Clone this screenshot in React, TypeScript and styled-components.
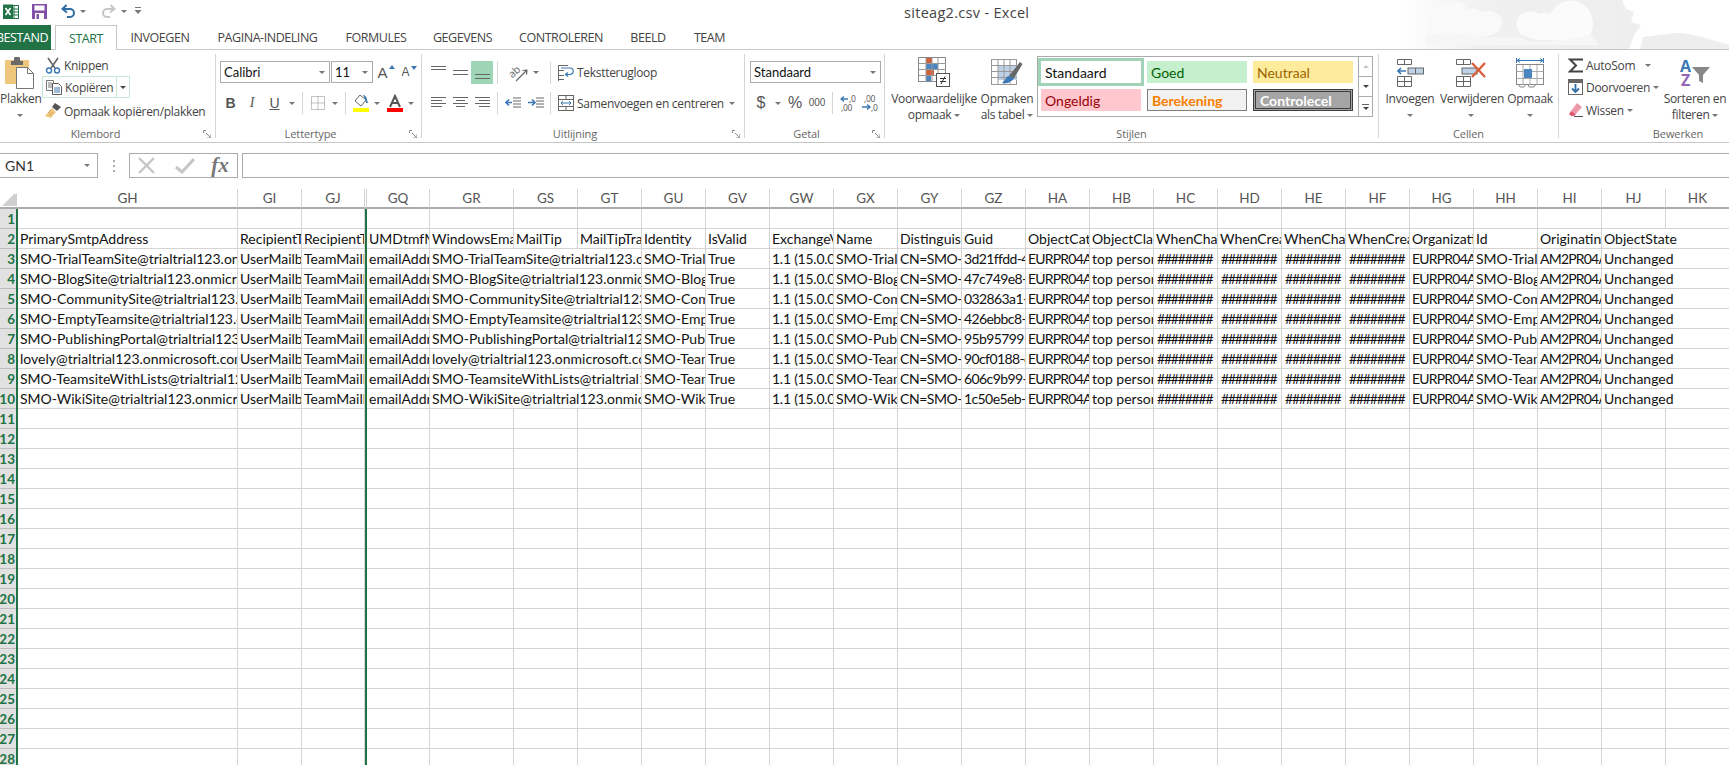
import React from 'react';
import styled, { createGlobalStyle } from 'styled-components';

const UI = `"Open Sans", "Noto Sans", sans-serif`;
const CELL = `Lato, "Open Sans", sans-serif`;

const Global = createGlobalStyle`
  html, body { margin: 0; padding: 0; height: 765px; overflow: hidden; background: #fff; }
  #root { width: 1729px; height: 765px; overflow: hidden; }
  * { box-sizing: border-box; }
`;

const Page = styled.div`
  position: relative;
  width: 1729px;
  height: 765px;
  overflow: hidden;
  background: #fff;
  font-family: ${UI};
  letter-spacing: -0.3px;
  color: #444;
`;

/* ---------- title bar ---------- */
const TitleBar = styled.div`
  display: flex;
  align-items: flex-start;
  height: 25px;
`;
const Qat = styled.div`
  display: flex;
  align-items: center;
  width: 160px;
  height: 22px;
  padding-left: 2px;
`;
const QatSlot = styled.span<{ $w: number }>`
  display: flex;
  align-items: center;
  justify-content: center;
  width: ${p => p.$w}px;
`;
const TitleText = styled.div`
  margin: 5px 0 0 744px;
  font-size: 14.5px;
  line-height: 16px;
  letter-spacing: 0.3px;
  color: #444;
`;
const Watermark = styled.svg`
  position: absolute;
  top: 0;
  left: 1390px;
  pointer-events: none;
`;

/* ---------- tabs ---------- */
const TabRow = styled.div`
  position: relative;
  display: flex;
  height: 25px;
  border-bottom: 1px solid #c6c6c6;
  letter-spacing: -0.45px;
`;
const FileTab = styled.div`
  display: flex;
  align-items: center;
  justify-content: flex-end;
  width: 51px;
  height: 25px;
  padding-right: 3px;
  background: #217346;
  color: #fff;
  font-size: 12.5px;
  overflow: hidden;
  white-space: nowrap;
`;
const ActiveTab = styled.div`
  display: flex;
  align-items: center;
  justify-content: center;
  width: 62px;
  height: 25px;
  margin-left: 4px;
  border: 1px solid #c6c6c6;
  border-bottom: 0;
  background: #fff;
  color: #217346;
  font-size: 12.5px;
`;
const Tab = styled.div<{ $w: number }>`
  display: flex;
  align-items: center;
  justify-content: center;
  width: ${p => p.$w}px;
  height: 24px;
  font-size: 12.5px;
  color: #444;
  white-space: nowrap;
`;

/* ---------- ribbon ---------- */
const Ribbon = styled.div`
  display: flex;
  height: 93px;
  padding-top: 4px;
  border-bottom: 1px solid #c6c6c6;
`;
const Group = styled.section<{ $w: number; $end?: boolean }>`
  flex: none;
  display: flex;
  flex-direction: column;
  width: ${p => p.$w}px;
  height: 84px;
  border-right: ${p => (p.$end ? '0' : '1px solid #d4d4d4')};
`;
const GroupBody = styled.div<{ $pl?: number }>`
  display: flex;
  height: 72px;
  padding-left: ${p => p.$pl ?? 0}px;
`;
const GroupFooter = styled.div<{ $pr?: number }>`
  position: relative;
  height: 12px;
  padding-right: ${p => p.$pr ?? 0}px;
  text-align: center;
  font-size: 11px;
  letter-spacing: -0.1px;
  line-height: 16px;
  color: #666;
`;
const Launcher = styled.svg`
  position: absolute;
  right: 4px;
  top: 4px;
`;
const Caret = styled.span<{ $dark?: boolean; $ml?: number }>`
  display: inline-block;
  width: 0;
  height: 0;
  margin-left: ${p => p.$ml ?? 0}px;
  border-left: 3.5px solid transparent;
  border-right: 3.5px solid transparent;
  border-top: 3.5px solid ${p => (p.$dark ? '#444' : '#777')};
  vertical-align: middle;
`;
const LargeButton = styled.div<{ $w: number; $ml?: number }>`
  flex: none;
  display: flex;
  flex-direction: column;
  align-items: center;
  width: ${p => p.$w}px;
  margin-left: ${p => p.$ml ?? 0}px;
`;
const LargeIcon = styled.div`
  display: flex;
  align-items: center;
  justify-content: center;
  width: 100%;
  height: 37px;
`;
const LargeLabel = styled.div`
  width: 100%;
  text-align: center;
  font-size: 12px;
  line-height: 16px;
  white-space: nowrap;
  color: #444;
`;
const SmallColumn = styled.div<{ $w: number; $ml?: number }>`
  flex: none;
  display: flex;
  flex-direction: column;
  width: ${p => p.$w}px;
  margin-left: ${p => p.$ml ?? 0}px;
`;
const SmallRow = styled.div<{ $mt?: number }>`
  display: flex;
  align-items: center;
  height: 22px;
  margin-top: ${p => p.$mt ?? 0}px;
  font-size: 12px;
  color: #444;
  white-space: nowrap;
`;
const SmallIcon = styled.span`
  flex: none;
  display: flex;
  align-items: center;
  justify-content: center;
  width: 22px;
`;
const CopyBox = styled(SmallRow)`
  width: 88px;
  border: 1px solid #c6e8d5;
`;
const CopyLabel = styled.span`
  display: flex;
  align-items: center;
  flex: 1;
  height: 100%;
  border-right: 1px solid #c6e8d5;
`;
const CopyArrow = styled.span`
  display: flex;
  align-items: center;
  justify-content: center;
  width: 12px;
`;
const ToolColumn = styled.div<{ $mt?: number }>`
  display: flex;
  flex-direction: column;
  margin-top: ${p => p.$mt ?? 7}px;
`;
const ToolRow = styled.div<{ $h?: number; $mt?: number }>`
  display: flex;
  align-items: center;
  height: ${p => p.$h ?? 22}px;
  margin-top: ${p => p.$mt ?? 0}px;
`;
const Tool = styled.span<{ $w: number; $on?: boolean }>`
  flex: none;
  display: flex;
  align-items: center;
  justify-content: center;
  width: ${p => p.$w}px;
  height: 100%;
  background: ${p => (p.$on ? '#9fd5b7' : 'transparent')};
`;
const MarkedGlyph = styled.span`
  display: flex;
  align-items: flex-start;
  gap: 1px;
`;
const Sep = styled.span<{ $w: number }>`
  flex: none;
  display: flex;
  justify-content: center;
  width: ${p => p.$w}px;
  height: 22px;
  &::before { content: ''; width: 1px; height: 100%; background: #d4d4d4; }
`;
const ComboBox = styled.div<{ $w: number; $ml?: number }>`
  flex: none;
  display: flex;
  align-items: center;
  justify-content: space-between;
  width: ${p => p.$w}px;
  height: 22px;
  margin-left: ${p => p.$ml ?? 0}px;
  padding: 0 4px 0 3px;
  border: 1px solid #ababab;
  background: #fff;
  font-family: ${CELL};
  font-size: 13px;
  letter-spacing: 0;
  color: #111;
`;
const FontGlyph = styled.span<{ $size: number; $weight?: number; $italic?: boolean; $line?: boolean; $serif?: boolean }>`
  font-family: ${p => (p.$serif ? '"Liberation Serif", serif' : '"Liberation Sans", sans-serif')};
  font-size: ${p => p.$size}px;
  font-weight: ${p => p.$weight ?? 400};
  font-style: ${p => (p.$italic ? 'italic' : 'normal')};
  text-decoration: ${p => (p.$line ? 'underline' : 'none')};
  letter-spacing: 0;
  color: #555;
  line-height: 1;
`;
const WrapLabel = styled.span`
  font-size: 12px;
  color: #444;
  white-space: nowrap;
`;
const MergeLabel = styled(WrapLabel)`
  width: 152px;
`;

/* style gallery */
const Gallery = styled.div`
  flex: none;
  display: flex;
  width: 336px;
  height: 61px;
  margin: 2px 0 0 3px;
  border: 1px solid #ababab;
`;
const GalleryGrid = styled.div`
  display: grid;
  grid-template-columns: repeat(3, 106px);
  grid-template-rows: repeat(2, 28px);
  padding: 1px 0 1px 0;
  width: 320px;
`;
const styleVariants: Record<string, string> = {
  normal: 'background:#fff;color:#111;outline:3px solid #a0d3b8;',
  good: 'background:#c6efce;color:#006100;',
  neutral: 'background:#ffeb9c;color:#9c6500;',
  bad: 'background:#ffc7ce;color:#9c0006;',
  calc: 'background:#f2f2f2;color:#fa7d00;font-weight:700;border:1px solid #7f7f7f;',
  check: 'background:#a5a5a5;color:#fff;font-weight:700;border:3px double #3f3f3f;',
};
const StyleCell = styled.div<{ $kind: string }>`
  display: flex;
  align-items: center;
  margin: 3px;
  padding-left: 4px;
  font-family: ${CELL};
  font-size: 14px;
  letter-spacing: 0;
  overflow: hidden;
  white-space: nowrap;
  ${p => styleVariants[p.$kind]}
`;
const GalleryScroll = styled.div`
  display: flex;
  flex-direction: column;
  width: 14px;
  border-left: 1px solid #ababab;
`;
const ScrollBtn = styled.div<{ $last?: boolean }>`
  display: flex;
  flex-direction: column;
  align-items: center;
  justify-content: center;
  gap: 2px;
  flex: 1;
  border-bottom: ${p => (p.$last ? '0' : '1px solid #ababab')};
`;
const ScrollBar = styled.span`
  width: 7px;
  height: 1px;
  background: #666;
`;
const ScrollUp = styled.span`
  width: 0;
  height: 0;
  border-left: 3.5px solid transparent;
  border-right: 3.5px solid transparent;
  border-bottom: 3.5px solid #c6c6c6;
`;

/* ---------- formula bar ---------- */
const FormulaBar = styled.div`
  display: flex;
  align-items: stretch;
  height: 25px;
  margin-top: 10px;
`;
const NameBox = styled.div`
  display: flex;
  align-items: center;
  justify-content: space-between;
  width: 99px;
  margin-left: -1px;
  padding: 0 7px 0 5px;
  border: 1px solid #ababab;
  font-family: ${CELL};
  font-size: 14px;
  letter-spacing: 0;
  color: #333;
`;
const Dots = styled.div`
  display: flex;
  align-items: center;
  justify-content: center;
  width: 31px;
  &::before {
    content: '';
    width: 2px;
    height: 2px;
    background: #aaa;
    box-shadow: 0 -5px 0 #aaa, 0 5px 0 #aaa;
  }
`;
const FxBox = styled.div`
  display: flex;
  align-items: center;
  width: 109px;
  border: 1px solid #ababab;
`;
const FxSlot = styled.span<{ $w: number }>`
  display: flex;
  align-items: center;
  justify-content: center;
  width: ${p => p.$w}px;
`;
const FxText = styled.span`
  font-family: "Liberation Serif", serif;
  font-style: italic;
  font-weight: 700;
  font-size: 21px;
  letter-spacing: 0;
  color: #777;
  line-height: 1;
`;
const FormulaInput = styled.div`
  flex: 1;
  margin-left: 4px;
  margin-right: -2px;
  border: 1px solid #ababab;
  border-right: 0;
`;

/* ---------- sheet ---------- */
const Sheet = styled.div`
  display: grid;
  grid-template-columns: 16px 2px 220px 64px 63px 2px 63px 84px repeat(19, 64px);
  grid-template-rows: 20px;
  grid-auto-rows: 20px;
  margin-top: 11px;
  width: 1730px;
  letter-spacing: 0;
`;
const Corner = styled.div`
  position: relative;
  border-bottom: 2px solid #ababab;
  background: #fff;
  &::after {
    content: '';
    position: absolute;
    right: 1px;
    bottom: 1px;
    width: 13px;
    height: 13px;
    background: #cfcfcf;
    clip-path: polygon(100% 0, 100% 100%, 0 100%);
  }
`;
const HeadCell = styled.div`
  display: flex;
  align-items: center;
  justify-content: center;
  border-right: 1px solid #d4d4d4;
  border-bottom: 2px solid #ababab;
  font-family: ${CELL};
  font-size: 13.5px;
  color: #555;
`;
const FreezeHead = styled.div`
  border-bottom: 2px solid #ababab;
  border-right: 1px solid #d4d4d4;
`;
const GreenLine = styled.div`
  background: #217346;
`;
const RowHead = styled.div`
  display: flex;
  align-items: flex-end;
  justify-content: flex-end;
  padding-right: 1px;
  background: #e1e1e1;
  border-bottom: 1px solid #bdbdbd;
  font-family: ${CELL};
  font-weight: 700;
  font-size: 13.5px;
  line-height: 18px;
  color: #217346;
  overflow: hidden;
`;
const Cell = styled.div<{ $span?: number; $tight?: number; $pl?: number }>`
  grid-column: span ${p => p.$span ?? 1};
  padding-left: ${p => p.$pl ?? 2}px;
  border-right: 1px solid #d4d4d4;
  border-bottom: 1px solid #d4d4d4;
  font-family: ${CELL};
  font-size: 14px;
  letter-spacing: ${p => p.$tight ?? 0}px;
  line-height: 19px;
  color: #111;
  white-space: nowrap;
  overflow: hidden;
`;

/* ---------- icons ---------- */
const ExcelLogo = () => (
  <svg width="18" height="18" viewBox="0 0 18 18">
    <rect x="7.5" y="3.5" width="9" height="13" fill="#fff" stroke="#217346" />
    <path d="M12 4v12M8 7h8M8 10h8M8 13h8" stroke="#217346" />
    <rect x="1" y="2.5" width="10" height="14.5" fill="#217346" />
    <path d="M3.5 6l5 7M8.5 6l-5 7" stroke="#fff" strokeWidth="1.7" />
  </svg>
);
const SaveIcon = () => (
  <svg width="15" height="15" viewBox="0 0 15 15">
    <path d="M0 0h15v15H0z" fill="#8250a8" />
    <rect x="2.5" y="1.5" width="10" height="5" fill="#fff" />
    <rect x="3" y="9" width="9" height="6" fill="#fff" />
    <rect x="4.5" y="10" width="2.5" height="5" fill="#8250a8" />
  </svg>
);
const UndoIcon = ({ c }: { c: string }) => (
  <svg width="15" height="14" viewBox="0 0 15 14" fill="none">
    <path d="M5.5 1L1.5 5l4.5 3.5" stroke={c} strokeWidth="2" />
    <path d="M2 5h7a4 4 0 0 1 0 8H6" stroke={c} strokeWidth="2" />
  </svg>
);
const RedoIcon = ({ c }: { c: string }) => (
  <svg width="15" height="14" viewBox="0 0 15 14" fill="none">
    <path d="M9.5 1l4 4L9 8.5" stroke={c} strokeWidth="2" />
    <path d="M13 5H6a4 4 0 0 0 0 8h3" stroke={c} strokeWidth="2" />
  </svg>
);
const CustomizeIcon = () => (
  <svg width="8" height="8" viewBox="0 0 8 8">
    <path d="M1 0h6v1H1zM0.5 3h7L4 7z" fill="#777" />
  </svg>
);
const PasteIcon = () => (
  <svg width="30" height="32" viewBox="0 0 30 32">
    <rect x="0" y="3" width="24" height="24" rx="1" fill="#efc77c" />
    <path d="M6 4h3V2a3 3 0 0 1 6 0v2h3v4H6z" fill="#6b6b6b" />
    <path d="M11.5 10.5h11l6 6v15h-17z" fill="#fff" stroke="#777" />
    <path d="M22.5 10.5v6h6" fill="none" stroke="#777" />
  </svg>
);
const ScissorsIcon = () => (
  <svg width="16" height="17" viewBox="0 0 16 17" fill="none">
    <path d="M3 1l7 10M13 1L6 11" stroke="#666" strokeWidth="1.6" />
    <circle cx="4" cy="13.5" r="2.5" stroke="#3c78b4" strokeWidth="1.4" />
    <circle cx="12" cy="13.5" r="2.5" stroke="#3c78b4" strokeWidth="1.4" />
  </svg>
);
const CopyIcon = () => (
  <svg width="16" height="16" viewBox="0 0 16 16" fill="none">
    <path d="M.5 1.5h7v10h-7z" fill="#fff" stroke="#777" />
    <path d="M2 4h4M2 6h4M2 8h4" stroke="#777" />
    <path d="M6.5 4.5h6l3 3v8h-9z" fill="#fff" stroke="#5b5b5b" />
    <path d="M8 9h6M8 11h6M8 13h6" stroke="#3c78b4" />
  </svg>
);
const BrushIcon = () => (
  <svg width="17" height="16" viewBox="0 0 17 16">
    <path d="M10 0l6 4-4 4-5-4z" fill="#555" />
    <path d="M7 5l4 4-5 6-6-2z" fill="#efc77c" />
    <path d="M3 10l3-3M4.5 12l3-3" stroke="#c99f50" />
  </svg>
);
const TinyA = ({ up }: { up?: boolean }) => (
  <svg width="6" height="4" viewBox="0 0 6 4">
    <path d={up ? 'M0 4h6L3 0z' : 'M0 0h6L3 4z'} fill="#3c78b4" />
  </svg>
);
const BordersIcon = () => (
  <svg width="14" height="14" viewBox="0 0 14 14" fill="none">
    <path d="M.5.5h13v13H.5zM7 .5v13M.5 7h13" stroke="#888" strokeDasharray="1 1" />
  </svg>
);
const FillIcon = () => (
  <svg width="18" height="18" viewBox="0 0 18 18" fill="none">
    <path d="M8 1l6 5-5 6-6-5z" fill="#fff" stroke="#666" />
    <path d="M11 1c2 0 4 2 4 5l1 3-2 0-1-4z" fill="#3c78b4" />
    <rect x="1" y="14" width="16" height="4" fill="#ffff00" />
  </svg>
);
const LinesIcon = ({ y, w = [15, 15], o = 'left' }: { y: number[]; w?: number[]; o?: string }) => (
  <svg width="15" height="15" viewBox="0 0 15 15">
    {y.map((v, i) => {
      const lw = w[i % w.length];
      const x = o === 'left' ? 0 : o === 'right' ? 15 - lw : (15 - lw) / 2;
      return <rect key={i} x={x} y={v} width={lw} height="1" fill="#666" />;
    })}
  </svg>
);
const OrientIcon = () => (
  <svg width="22" height="18" viewBox="0 0 22 18" fill="none">
    <text x="0" y="12" transform="rotate(-42 5 9)" fontFamily="Open Sans, sans-serif" fontSize="10.5" fill="#666">ab</text>
    <path d="M7 17L18 6M18 6l-4.500 .5M18 6l-.5 4.500" stroke="#666" strokeWidth="1.200" />
  </svg>
);
const IndentIcon = ({ inc }: { inc?: boolean }) => (
  <svg width="16" height="12" viewBox="0 0 16 12" fill="none">
    <path d="M8 1h8M8 4h8M8 7h8M8 10h8" stroke="#666" />
    <path d={inc ? 'M0 5.5h6M4 2.5l3 3-3 3' : 'M7 5.5H1M4 2.5l-3 3 3 3'} stroke="#3c78b4" strokeWidth="1.6" />
  </svg>
);
const WrapIcon = () => (
  <svg width="16" height="16" viewBox="0 0 16 16" fill="none">
    <path d="M0 .5h10M0 5.5h6M0 10.5h6M0 14.5h6" stroke="#666" />
    <path d="M.5 0v16" stroke="#666" />
    <path d="M3 3h9a3 3 0 0 1 0 6.500H8M10 7.500l-2.500 2 2.500 2" stroke="#3c78b4" strokeWidth="1.2" />
  </svg>
);
const MergeIcon = () => (
  <svg width="16" height="16" viewBox="0 0 16 16" fill="none">
    <rect x=".5" y=".5" width="15" height="15" stroke="#666" />
    <path d="M1 4.500h14M1 11.500h14M8 1v3.500M8 11.500V15" stroke="#666" />
    <path d="M3 8h10M5 6L3 8l2 2M11 6l2 2-2 2" stroke="#3c78b4" />
  </svg>
);
const DecIcon = ({ inc }: { inc?: boolean }) => (
  <svg width="17" height="17" viewBox="0 0 17 17" fill="none">
    {inc ? (
      <>
        <path d="M8 4H1M4 1.500L1 4l3 2.500" stroke="#3c78b4" strokeWidth="1.400" />
        <text x="9" y="7" fontFamily="Open Sans, sans-serif" fontSize="8.500" fill="#555">,0</text>
        <text x="1" y="16" fontFamily="Open Sans, sans-serif" fontSize="8.500" fill="#555">,00</text>
      </>
    ) : (
      <>
        <text x="2" y="7" fontFamily="Open Sans, sans-serif" fontSize="8.500" fill="#555">,00</text>
        <path d="M0 12h8M5 9.500l3 2.500-3 2.500" stroke="#3c78b4" strokeWidth="1.400" />
        <text x="9" y="16" fontFamily="Open Sans, sans-serif" fontSize="8.500" fill="#555">,0</text>
      </>
    )}
  </svg>
);
const CondFormatIcon = () => (
  <svg width="32" height="32" viewBox="0 0 32 32" fill="none">
    <rect x=".5" y=".5" width="27" height="24" fill="#fff" stroke="#888" />
    <rect x="8" y="1" width="6" height="5" fill="#d0603a" />
    <rect x="8" y="6" width="12" height="6" fill="#4a86c0" />
    <rect x="8" y="12" width="8" height="6" fill="#d0603a" />
    <rect x="8" y="18" width="5" height="6" fill="#4a86c0" />
    <path d="M8 1v24M14 1v24M20 1v24M1 6.500h27M1 12.500h27M1 18.500h27" stroke="#999" />
    <rect x="18.500" y="16.500" width="13" height="13" fill="#fff" stroke="#555" />
    <path d="M22 21.500h6M22 24.500h6M27 19.500l-4 7.500" stroke="#333" />
  </svg>
);
const TableFormatIcon = () => (
  <svg width="32" height="32" viewBox="0 0 32 32" fill="none">
    <rect x=".5" y="2.500" width="25" height="25" fill="#fff" stroke="#999" />
    <rect x="7" y="8" width="19" height="15" fill="#bed1e6" />
    <path d="M7 3v25M13 3v25M19 3v25M1 8.500h25M1 14.500h25M1 20.500h25" stroke="#999" />
    <path d="M18 19L29 5l2.500 2L23 21z" fill="#666" />
    <path d="M18 19c-3 0-3 4-7 7 5 1 10-1 12-5z" fill="#3c78b4" />
  </svg>
);
const InsertCellsIcon = () => (
  <svg width="27" height="28" viewBox="0 0 27 28" fill="none">
    <path d="M.5.5h14v5H.5zM7.500 1v5M.500 17.500h14v10H.5zM7.500 18v9M1 22.500h13" stroke="#666" />
    <rect x="11" y="9" width="15.500" height="6" fill="#bed1e6" stroke="#666" />
    <path d="M18.500 9v6" stroke="#666" />
    <path d="M9 12H1M4 9L1 12l3 3" stroke="#3c78b4" strokeWidth="1.700" />
  </svg>
);
const DeleteCellsIcon = () => (
  <svg width="31" height="28" viewBox="0 0 31 28" fill="none">
    <path d="M.5.5h14v5H.5zM7.500 1v5M.500 17.500h14v10H.5zM7.500 18v9M1 22.500h13" stroke="#666" />
    <rect x="6" y="9" width="15" height="6" fill="#bed1e6" stroke="#666" />
    <path d="M16 4l13 14M29 4L16 18" stroke="#d8603c" strokeWidth="2.400" />
  </svg>
);
const FormatCellsIcon = () => (
  <svg width="28" height="30" viewBox="0 0 28 30" fill="none">
    <path d="M.5 0v5M27.500 0v5M1 2.500h26M4 .5L1 2.500l3 2M24 .5l3 2-3 2" stroke="#3c78b4" />
    <rect x=".5" y="6.500" width="27" height="20" fill="#fff" stroke="#888" />
    <path d="M7 7v20M14 7v20M21 7v20M1 13.500h26M1 20.500h26" stroke="#aaa" />
    <rect x="8" y="11" width="8" height="9" fill="#4a86c0" />
    <path d="M2 26l2 3h4l2-3M12 26l1 3h5l2-3" stroke="#888" />
  </svg>
);
const SigmaIcon = () => (
  <svg width="15" height="15" viewBox="0 0 15 15" fill="none">
    <path d="M15 1.500H2L8 7.500 2 13.500h13" stroke="#444" strokeWidth="2" />
  </svg>
);
const FillDownIcon = () => (
  <svg width="15" height="16" viewBox="0 0 15 16" fill="none">
    <rect x=".5" y=".5" width="14" height="15" fill="#fff" stroke="#666" />
    <rect x="0" y="0" width="15" height="4" fill="#666" />
    <path d="M7.500 5v8M4 9.500l3.500 3.500 3.500-3.500" stroke="#2f6ea5" strokeWidth="1.800" />
  </svg>
);
const EraserIcon = () => (
  <svg width="15" height="14" viewBox="0 0 15 14">
    <path d="M9 0l5 4-6 7-5-3z" fill="#ec9aa8" />
    <path d="M3 8l5 3-2 2H3L1 11z" fill="#e05a72" />
    <rect x="6" y="13" width="9" height="1" fill="#555" />
  </svg>
);
const SortIcon = () => (
  <svg width="30" height="28" viewBox="0 0 30 28">
    <text x="0" y="13" fontFamily="Open Sans, sans-serif" fontWeight="700" fontSize="16" fill="#3c78b4">A</text>
    <text x="1" y="27" fontFamily="Open Sans, sans-serif" fontWeight="700" fontSize="16" fill="#9467b8">Z</text>
    <path d="M12 8h18l-7 8v8l-4-2v-6z" fill="#888" />
  </svg>
);
const CrossIcon = () => (
  <svg width="17" height="17" viewBox="0 0 17 17" fill="none">
    <path d="M1 1l15 15M16 1L1 16" stroke="#c6c6c6" strokeWidth="2.400" />
  </svg>
);
const CheckIcon = () => (
  <svg width="20" height="16" viewBox="0 0 20 16" fill="none">
    <path d="M1 9l6 5L19 1" stroke="#c6c6c6" strokeWidth="3" />
  </svg>
);
const LauncherIcon = () => (
  <Launcher width="8" height="8" viewBox="0 0 8 8" fill="none">
    <path d="M.5 3V.5H3M8 8L3 3M4 8h4V4" stroke="#888" />
  </Launcher>
);

/* ---------- data ---------- */
const mailboxes = [
  { mail: 'SMO-TrialTeamSite', id: 'SMO-TrialTeamSite', guid: '3d21ffdd-4b2a' },
  { mail: 'SMO-BlogSite', id: 'SMO-BlogSite', guid: '47c749e8-90ab' },
  { mail: 'SMO-CommunitySite', id: 'SMO-CommunitySite', guid: '032863a1-77c2' },
  { mail: 'SMO-EmptyTeamsite', id: 'SMO-EmptyTeamsite', guid: '426ebbc8-2d01' },
  { mail: 'SMO-PublishingPortal', id: 'SMO-PublishingPortal', guid: '95b95799-6f1e' },
  { mail: 'lovely', id: 'SMO-TeamSite', guid: '90cf0188-e3a4' },
  { mail: 'SMO-TeamsiteWithLists', id: 'SMO-TeamsiteWithLists', guid: '606c9b99-18d7' },
  { mail: 'SMO-WikiSite', id: 'SMO-WikiSite', guid: '1c50e5eb-c4f2' },
];
const heads = ['GH', 'GI', 'GJ', '|', 'GQ', 'GR', 'GS', 'GT', 'GU', 'GV', 'GW', 'GX', 'GY', 'GZ', 'HA', 'HB', 'HC', 'HD', 'HE', 'HF', 'HG', 'HH', 'HI', 'HJ', 'HK'];
const titles = ['PrimarySmtpAddress', 'RecipientType', 'RecipientTypeDetails', '|', 'UMDtmfMap', 'WindowsEmailAddress', 'MailTip', 'MailTipTranslations', 'Identity', 'IsValid', 'ExchangeVersion', 'Name', 'DistinguishedName', 'Guid', 'ObjectCategory', 'ObjectClass', 'WhenChanged', 'WhenCreated', 'WhenChangedUTC', 'WhenCreatedUTC', 'OrganizationId', 'Id', 'OriginatingServer'];
const HASH = '########';

const blankRow = (r: number) =>
  heads.map((h, i) => (h === '|' ? <GreenLine key={`${r}${i}`} /> : <Cell key={`${r}${i}`} />));

const dataRow = (r: number, m: (typeof mailboxes)[number]) => {
  const email = `${m.mail}@trialtrial123.onmicrosoft.com`;
  return (
    <React.Fragment key={r}>
      <Cell>{email}</Cell>
      <Cell>UserMailbox</Cell>
      <Cell>TeamMailbox</Cell>
      <GreenLine />
      <Cell>emailAddress</Cell>
      <Cell $span={3}>{email}</Cell>
      <Cell>{m.id}</Cell>
      <Cell>True</Cell>
      <Cell $tight={-0.25}>1.1 (15.0.0.0)</Cell>
      <Cell>{m.id}</Cell>
      <Cell $tight={-0.45}>{`CN=${m.id},OU=trialtrial123`}</Cell>
      <Cell $tight={-0.6}>{m.guid}</Cell>
      <Cell $tight={-0.8}>EURPR04A006.prod</Cell>
      <Cell>top person organizationalPerson</Cell>
      {[0, 1, 2, 3].map(i => <Cell key={i} $tight={-1.2} $pl={3}>{HASH}</Cell>)}
      <Cell $tight={-0.8}>EURPR04A006.prod</Cell>
      <Cell>{m.id}</Cell>
      <Cell $tight={-0.8}>AM2PR04A006.prod</Cell>
      <Cell $span={2}>Unchanged</Cell>
    </React.Fragment>
  );
};

const Grid = () => (
  <Sheet>
    <Corner />
    <Corner />
    {heads.map(h => (h === '|' ? <FreezeHead key={h} /> : <HeadCell key={h}>{h}</HeadCell>))}
    {Array.from({ length: 28 }, (_, k) => {
      const r = k + 1;
      return (
        <React.Fragment key={r}>
          <RowHead>{r}</RowHead>
          <GreenLine />
          {r === 2 ? (
            <>
              {titles.map(t => (t === '|' ? <GreenLine key={t} /> : <Cell key={t}>{t}</Cell>))}
              <Cell $span={2}>ObjectState</Cell>
            </>
          ) : r >= 3 && r <= 10 ? (
            dataRow(r, mailboxes[r - 3])
          ) : (
            blankRow(r)
          )}
        </React.Fragment>
      );
    })}
  </Sheet>
);

/* ---------- app ---------- */
export default function App() {
  return (
    <Page>
      <Global />
      <Watermark width="339" height="49" viewBox="0 0 339 49">
        <defs>
          <linearGradient id="wm" x1="0" x2="1" y1="0" y2="0">
            <stop offset="0" stopColor="#fff" />
            <stop offset="0.35" stopColor="#f0f0f0" />
            <stop offset="1" stopColor="#eee" />
          </linearGradient>
        </defs>
        <path d="M10 0H232l4 9 8 3-3 10 10 3-7 10-5 14H10z" fill="url(#wm)" />
        <path d="M250 49l3-12 32-4c20 0 40 8 54 12v4z" fill="#eee" />
        <path d="M42 38c-8-6-8-26 4-32 12-8 28-6 32 4 6-3 12 0 14 2 10-4 20 2 20 10 0 10-10 14-16 14H62z" fill="#f9f9f9" />
        <path d="M130 34c-6-8-4-20 6-22 6-2 10 0 14 2 4-2 8-2 10 1 4-10 16-16 26-14 12 3 20 16 16 30-2 8-10 10-16 8l-8 1H146z" fill="#fbfbfb" />
        <path d="M36 36c20-6 40 0 64 1H130c10 8 40 4 70-2l10 10H36z" fill="#f6f6f6" />
      </Watermark>

      <TitleBar>
        <Qat>
          <ExcelLogo />
          <QatSlot $w={12} />
          <SaveIcon />
          <QatSlot $w={14} />
          <UndoIcon c="#2f6ea5" />
          <QatSlot $w={14}><Caret /></QatSlot>
          <QatSlot $w={11} />
          <RedoIcon c="#c6c6c6" />
          <QatSlot $w={16}><Caret /></QatSlot>
          <QatSlot $w={11}><CustomizeIcon /></QatSlot>
        </Qat>
        <TitleText>siteag2.csv - Excel</TitleText>
      </TitleBar>

      <TabRow>
        <FileTab>BESTAND</FileTab>
        <ActiveTab>START</ActiveTab>
        <Tab $w={86}>INVOEGEN</Tab>
        <Tab $w={129}>PAGINA-INDELING</Tab>
        <Tab $w={88}>FORMULES</Tab>
        <Tab $w={85}>GEGEVENS</Tab>
        <Tab $w={112}>CONTROLEREN</Tab>
        <Tab $w={62}>BEELD</Tab>
        <Tab $w={61}>TEAM</Tab>
      </TabRow>

      <Ribbon>
        {/* Klembord */}
        <Group $w={216}>
          <GroupBody>
            <LargeButton $w={40}>
              <LargeIcon><PasteIcon /></LargeIcon>
              <LargeLabel>Plakken</LargeLabel>
              <LargeLabel><Caret /></LargeLabel>
            </LargeButton>
            <SmallColumn $w={170} $ml={2}>
              <SmallRow><SmallIcon><ScissorsIcon /></SmallIcon>Knippen</SmallRow>
              <CopyBox>
                <CopyLabel><SmallIcon><CopyIcon /></SmallIcon>Kopiëren</CopyLabel>
                <CopyArrow><Caret $dark /></CopyArrow>
              </CopyBox>
              <SmallRow $mt={2}><SmallIcon><BrushIcon /></SmallIcon>Opmaak kopiëren/plakken</SmallRow>
            </SmallColumn>
          </GroupBody>
          <GroupFooter $pr={24}>Klembord<LauncherIcon /></GroupFooter>
        </Group>

        {/* Lettertype */}
        <Group $w={206}>
          <GroupBody $pl={4}>
            <ToolColumn>
              <ToolRow>
                <ComboBox $w={110}>Calibri<Caret /></ComboBox>
                <ComboBox $w={42} $ml={1}>11<Caret /></ComboBox>
                <Tool $w={26}><MarkedGlyph><FontGlyph $size={15}>A</FontGlyph><TinyA up /></MarkedGlyph></Tool>
                <Tool $w={20}><MarkedGlyph><FontGlyph $size={12}>A</FontGlyph><TinyA /></MarkedGlyph></Tool>
              </ToolRow>
              <ToolRow $mt={9}>
                <Tool $w={21}><FontGlyph $size={14} $weight={700}>B</FontGlyph></Tool>
                <Tool $w={22}><FontGlyph $size={14} $italic $serif>I</FontGlyph></Tool>
                <Tool $w={23}><FontGlyph $size={14} $line>U</FontGlyph></Tool>
                <Tool $w={12}><Caret /></Tool>
                <Sep $w={8} />
                <Tool $w={24}><BordersIcon /></Tool>
                <Tool $w={10}><Caret /></Tool>
                <Sep $w={10} />
                <Tool $w={22}><FillIcon /></Tool>
                <Tool $w={10}><Caret /></Tool>
                <Tool $w={26}>
                  <svg width="16" height="18" viewBox="0 0 16 18" fill="none">
                    <path d="M3 13L8 2l5 11M5 9h6" stroke="#555" strokeWidth="2" />
                    <rect y="14" width="16" height="4" fill="#ff0000" />
                  </svg>
                </Tool>
                <Tool $w={6}><Caret /></Tool>
              </ToolRow>
            </ToolColumn>
          </GroupBody>
          <GroupFooter $pr={16}>Lettertype<LauncherIcon /></GroupFooter>
        </Group>

        {/* Uitlijning */}
        <Group $w={323}>
          <GroupBody $pl={5}>
            <ToolColumn>
              <ToolRow $h={23}>
                <Tool $w={22}><LinesIcon y={[1, 4]} /></Tool>
                <Tool $w={22}><LinesIcon y={[5, 9]} /></Tool>
                <Tool $w={22} $on><LinesIcon y={[9, 13]} /></Tool>
                <Sep $w={8} />
                <Tool $w={45}><OrientIcon /><Caret $ml={2} /></Tool>
                <Sep $w={8} />
                <Tool $w={23}><WrapIcon /></Tool>
                <WrapLabel>Tekstterugloop</WrapLabel>
              </ToolRow>
              <ToolRow $mt={8}>
                <Tool $w={22}><LinesIcon y={[1, 4, 7, 10]} w={[15, 11]} /></Tool>
                <Tool $w={22}><LinesIcon y={[1, 4, 7, 10]} w={[15, 9]} o="center" /></Tool>
                <Tool $w={22}><LinesIcon y={[1, 4, 7, 10]} w={[15, 11]} o="right" /></Tool>
                <Sep $w={8} />
                <Tool $w={24}><IndentIcon /></Tool>
                <Tool $w={21}><IndentIcon inc /></Tool>
                <Sep $w={8} />
                <Tool $w={23}><MergeIcon /></Tool>
                <MergeLabel>Samenvoegen en centreren</MergeLabel>
                <Caret />
              </ToolRow>
            </ToolColumn>
          </GroupBody>
          <GroupFooter $pr={16}>Uitlijning<LauncherIcon /></GroupFooter>
        </Group>

        {/* Getal */}
        <Group $w={140}>
          <GroupBody $pl={5}>
            <ToolColumn>
              <ToolRow>
                <ComboBox $w={131}>Standaard<Caret /></ComboBox>
              </ToolRow>
              <ToolRow $mt={9}>
                <Tool $w={22}><FontGlyph $size={16}>$</FontGlyph></Tool>
                <Tool $w={12}><Caret /></Tool>
                <Tool $w={22}><FontGlyph $size={16}>%</FontGlyph></Tool>
                <Tool $w={22}><FontGlyph $size={10}>000</FontGlyph></Tool>
                <Sep $w={8} />
                <Tool $w={24}><DecIcon inc /></Tool>
                <Tool $w={20}><DecIcon /></Tool>
              </ToolRow>
            </ToolColumn>
          </GroupBody>
          <GroupFooter $pr={16}>Getal<LauncherIcon /></GroupFooter>
        </Group>

        {/* Stijlen */}
        <Group $w={494}>
          <GroupBody>
            <LargeButton $w={92} $ml={3}>
              <LargeIcon><CondFormatIcon /></LargeIcon>
              <LargeLabel>Voorwaardelijke</LargeLabel>
              <LargeLabel>opmaak <Caret /></LargeLabel>
            </LargeButton>
            <LargeButton $w={54}>
              <LargeIcon><TableFormatIcon /></LargeIcon>
              <LargeLabel>Opmaken</LargeLabel>
              <LargeLabel>als tabel <Caret /></LargeLabel>
            </LargeButton>
            <Gallery>
              <GalleryGrid>
                <StyleCell $kind="normal">Standaard</StyleCell>
                <StyleCell $kind="good">Goed</StyleCell>
                <StyleCell $kind="neutral">Neutraal</StyleCell>
                <StyleCell $kind="bad">Ongeldig</StyleCell>
                <StyleCell $kind="calc">Berekening</StyleCell>
                <StyleCell $kind="check">Controlecel</StyleCell>
              </GalleryGrid>
              <GalleryScroll>
                <ScrollBtn><ScrollUp /></ScrollBtn>
                <ScrollBtn><Caret $dark /></ScrollBtn>
                <ScrollBtn $last><ScrollBar /><Caret $dark /></ScrollBtn>
              </GalleryScroll>
            </Gallery>
          </GroupBody>
          <GroupFooter>Stijlen</GroupFooter>
        </Group>

        {/* Cellen */}
        <Group $w={180}>
          <GroupBody $pl={1}>
            <LargeButton $w={60}>
              <LargeIcon><InsertCellsIcon /></LargeIcon>
              <LargeLabel>Invoegen</LargeLabel>
              <LargeLabel><Caret /></LargeLabel>
            </LargeButton>
            <LargeButton $w={62}>
              <LargeIcon><DeleteCellsIcon /></LargeIcon>
              <LargeLabel>Verwijderen</LargeLabel>
              <LargeLabel><Caret /></LargeLabel>
            </LargeButton>
            <LargeButton $w={56}>
              <LargeIcon><FormatCellsIcon /></LargeIcon>
              <LargeLabel>Opmaak</LargeLabel>
              <LargeLabel><Caret /></LargeLabel>
            </LargeButton>
          </GroupBody>
          <GroupFooter>Cellen</GroupFooter>
        </Group>

        {/* Bewerken */}
        <Group $w={238} $end>
          <GroupBody $pl={5}>
            <SmallColumn $w={98}>
              <SmallRow><SmallIcon><SigmaIcon /></SmallIcon>AutoSom<Caret $ml={10} /></SmallRow>
              <SmallRow><SmallIcon><FillDownIcon /></SmallIcon>Doorvoeren<Caret $ml={3} /></SmallRow>
              <SmallRow $mt={1}><SmallIcon><EraserIcon /></SmallIcon>Wissen<Caret $ml={3} /></SmallRow>
            </SmallColumn>
            <LargeButton $w={66}>
              <LargeIcon><SortIcon /></LargeIcon>
              <LargeLabel>Sorteren en</LargeLabel>
              <LargeLabel>filteren <Caret /></LargeLabel>
            </LargeButton>
          </GroupBody>
          <GroupFooter>Bewerken</GroupFooter>
        </Group>
      </Ribbon>

      <FormulaBar>
        <NameBox>GN1<Caret /></NameBox>
        <Dots />
        <FxBox>
          <FxSlot $w={32}><CrossIcon /></FxSlot>
          <FxSlot $w={45}><CheckIcon /></FxSlot>
          <FxSlot $w={26}><FxText>fx</FxText></FxSlot>
        </FxBox>
        <FormulaInput />
      </FormulaBar>

      <Grid />
    </Page>
  );
}
